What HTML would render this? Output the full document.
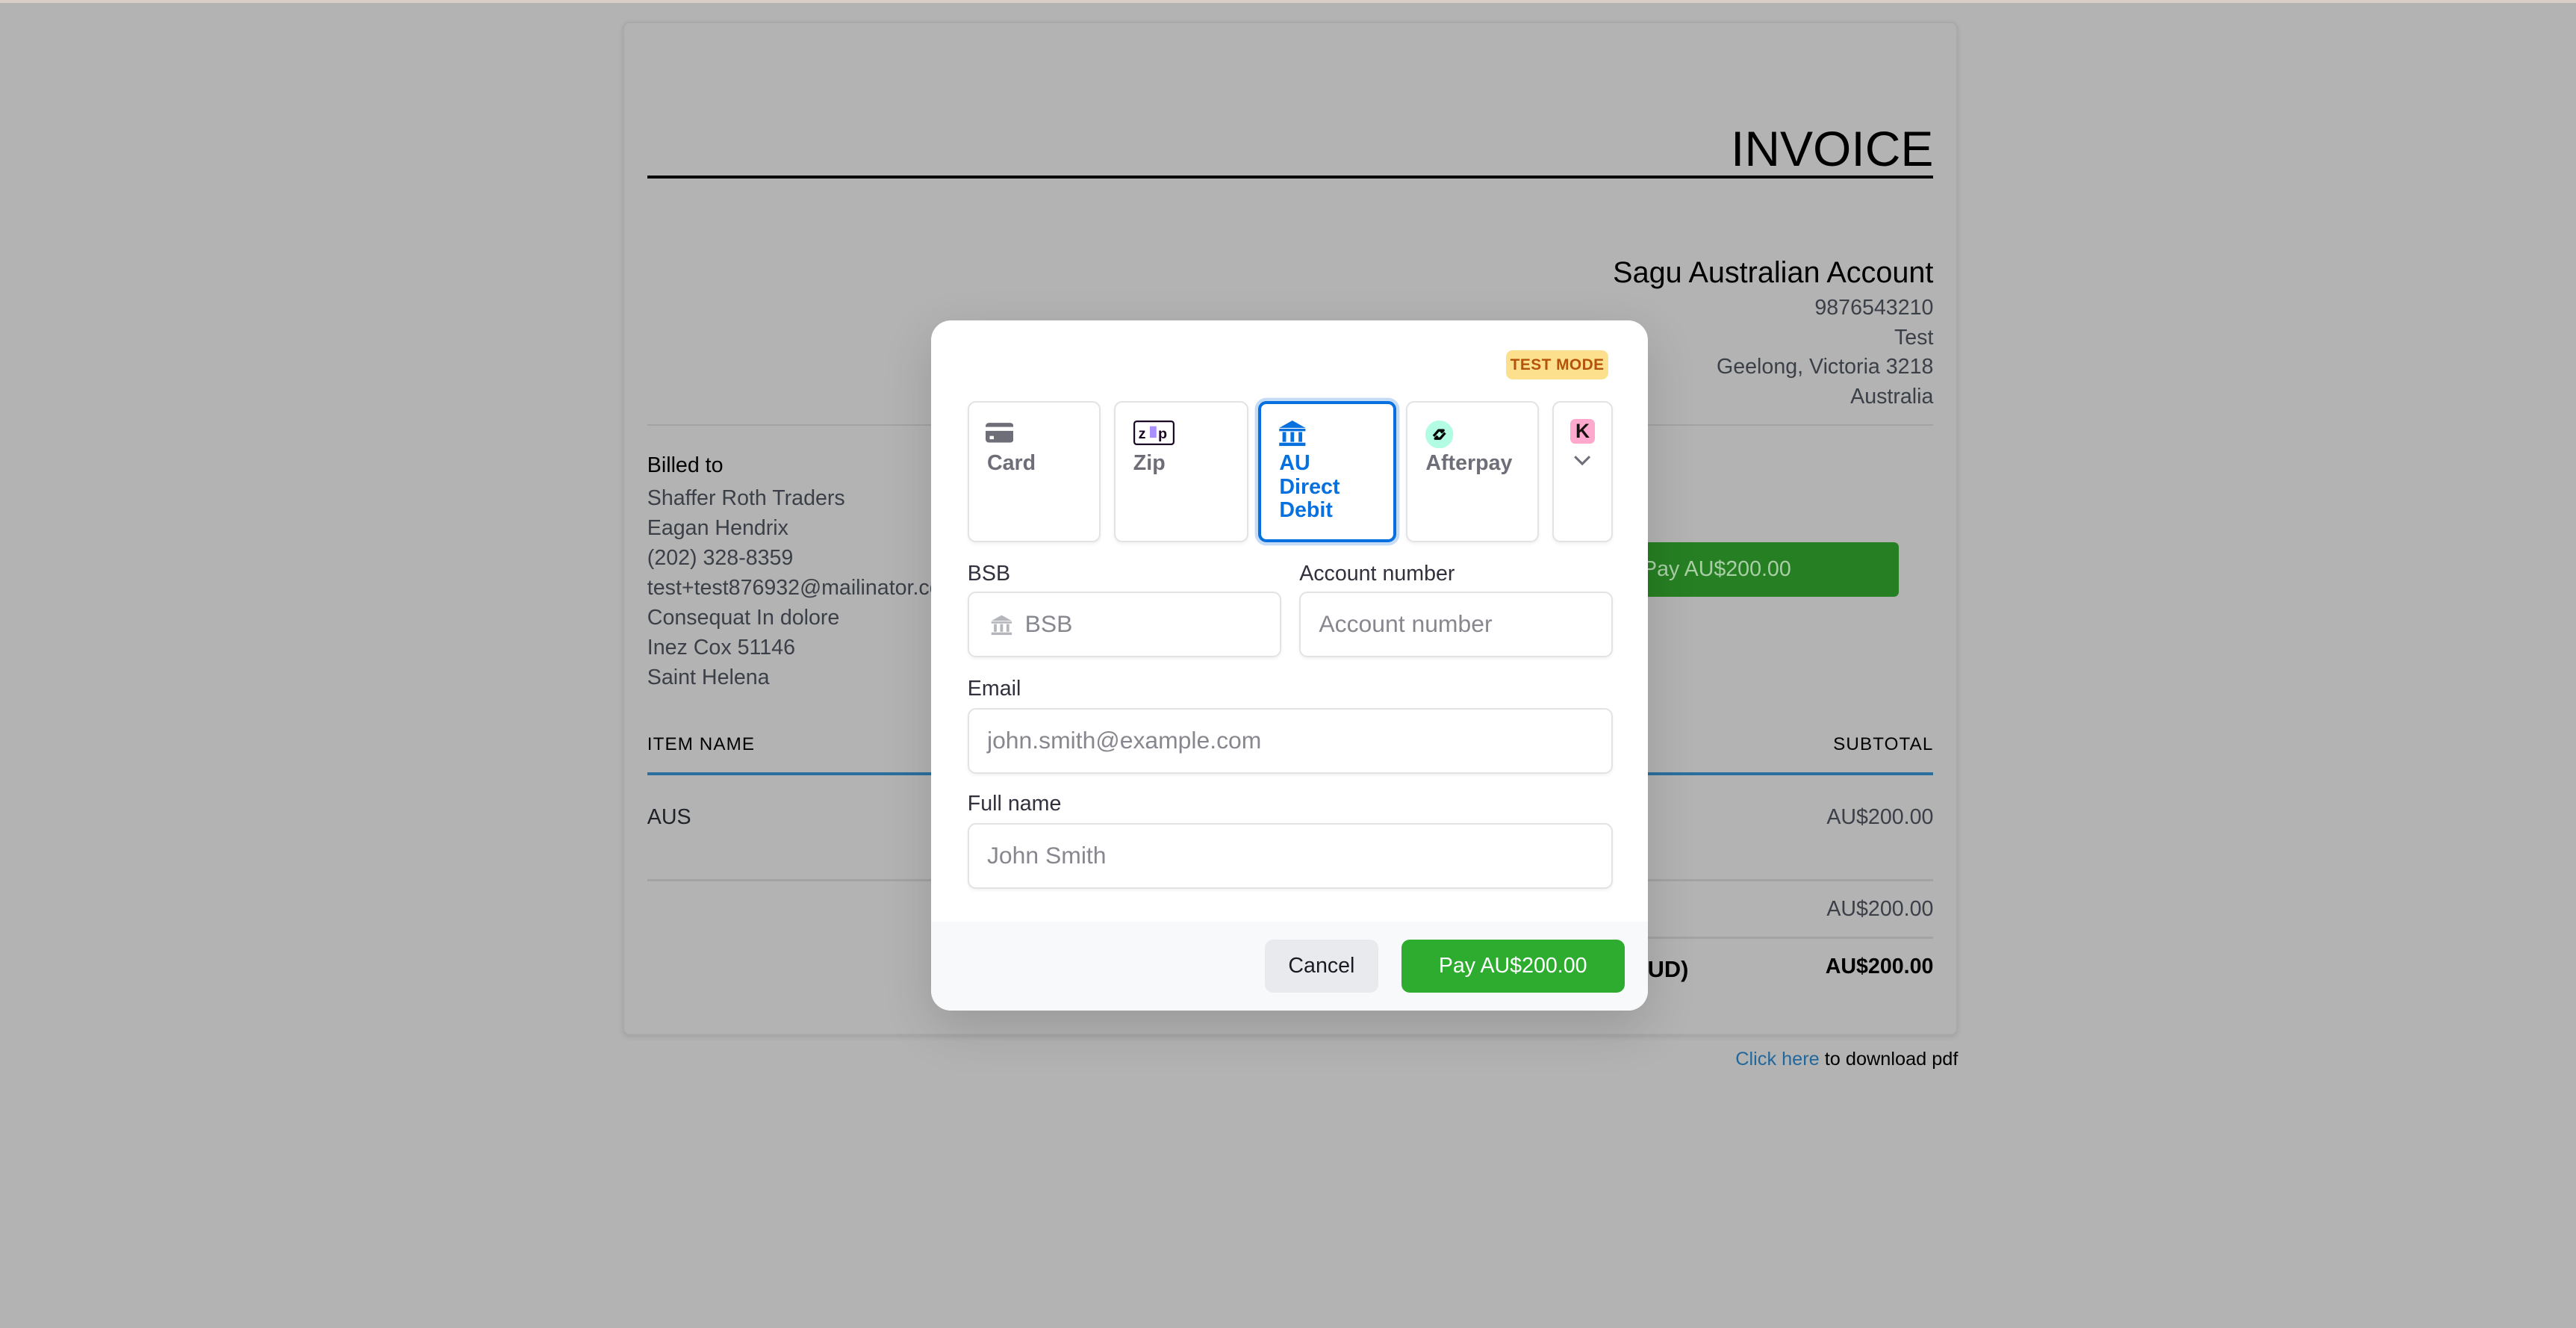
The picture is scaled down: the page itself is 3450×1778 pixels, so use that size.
<!DOCTYPE html>
<html><head><meta charset="utf-8">
<style>
*{box-sizing:border-box;margin:0;padding:0}
html,body{width:3450px;height:1778px;overflow:hidden;background:#b3b3b3}
#w{position:absolute;left:0;top:0;width:1568px;height:808px;zoom:2.2;font-family:"Liberation Sans",Helvetica,Arial,sans-serif;background:#b3b3b3}
.a{position:absolute;white-space:nowrap}
.r{text-align:right}
.g{color:#3b3f47;font-size:13px}
.tab{position:absolute;top:244px;height:86px;background:#fff;border:1px solid #e3e3e3;border-radius:5px;box-shadow:0 1px 2px rgba(0,0,0,.06)}
.tl{position:absolute;left:11px;top:30px;font-size:13px;font-weight:bold;color:#6d6e78;line-height:14.5px}
.lab{position:absolute;font-size:13px;color:#30313d}
.inp{position:absolute;height:40px;background:#fff;border:1px solid #e3e3e3;border-radius:5px;box-shadow:0 1px 2px rgba(0,0,0,.05);font-size:14.5px;color:#87888f;padding-left:11px;line-height:38px}
</style></head><body><div id="w">
<div class="a" style="left:0;top:0;width:1568px;height:2px;background:#d9cfc8"></div>
<div class="a" style="left:379px;top:13px;width:813px;height:617px;border:1px solid #a9a9a9;border-radius:4px;background:#b3b3b3;box-shadow:0 1px 3px rgba(0,0,0,.1)"></div>
<div class="a r" style="right:391px;top:73px;font-size:30px;color:#000">INVOICE</div>
<div class="a" style="left:394px;top:107px;width:783px;height:1.5px;background:#000"></div>
<div class="a r" style="right:391px;top:156px;font-size:18px;color:#000">Sagu Australian Account</div>
<div class="a r g" style="right:391px;top:180px">9876543210</div>
<div class="a r g" style="right:391px;top:198px">Test</div>
<div class="a r g" style="right:391px;top:216px">Geelong, Victoria 3218</div>
<div class="a r g" style="right:391px;top:234px">Australia</div>
<div class="a" style="left:394px;top:258px;width:783px;height:1px;background:#a3a3a3"></div>
<div class="a" style="left:394px;top:276px;font-size:13px;color:#000">Billed to</div>
<div class="a g" style="left:394px;top:294px;line-height:18.2px">Shaffer Roth Traders<br>Eagan Hendrix<br>(202) 328-8359<br>test+test876932@mailinator.com<br>Consequat In dolore<br>Inez Cox 51146<br>Saint Helena</div>
<div class="a" style="left:990px;top:330px;width:166px;height:33px;background:#267f22;border-radius:3px;color:#a9cfa7;font-size:13px;line-height:33px;padding-left:10px">Pay AU$200.00</div>
<div class="a" style="left:394px;top:447px;font-size:11px;letter-spacing:.5px;color:#000">ITEM NAME</div>
<div class="a r" style="right:391px;top:447px;font-size:11px;letter-spacing:.5px;color:#000">SUBTOTAL</div>
<div class="a" style="left:394px;top:470px;width:783px;height:2px;background:#2b6f9e"></div>
<div class="a" style="left:394px;top:490px;font-size:13px;color:#1f2329">AUS</div>
<div class="a r g" style="right:391px;top:490px">AU$200.00</div>
<div class="a" style="left:394px;top:535px;width:783px;height:1.5px;background:#a3a3a3"></div>
<div class="a r g" style="right:391px;top:546px">AU$200.00</div>
<div class="a" style="left:940px;top:570px;width:237px;height:1.5px;background:#a3a3a3"></div>
<div class="a" style="left:1003px;top:582px;font-size:14px;font-weight:bold;color:#000">UD)</div>
<div class="a r" style="right:391px;top:581px;font-size:13px;font-weight:bold;color:#000">AU$200.00</div>
<div class="a r" style="right:376px;top:638px;font-size:11.5px;color:#000"><span style="color:#22689c">Click here</span> to download pdf</div>

<div class="a" style="left:567px;top:195px;width:436px;height:420px;background:#fff;border-radius:12px;overflow:hidden;box-shadow:0 10px 30px rgba(0,0,0,.15)">
 <div class="a" style="left:0;top:366px;width:436px;height:54px;background:#f8f9fb"></div>
 <div class="a" style="left:350px;top:18px;width:62px;height:18px;background:#fde08d;border-radius:4px;font-size:9.5px;font-weight:bold;color:#b45309;line-height:18px;text-align:center;letter-spacing:.2px">TEST MODE</div>
</div>
<div class="tab" style="left:589px;width:81px">
 <svg class="a" style="left:10px;top:12px" width="17" height="13" viewBox="0 0 17 13"><rect x="0" y="0.5" width="17" height="12" rx="2" fill="#6d6e78"/><rect x="0" y="3" width="17" height="2.4" fill="#fff"/><rect x="2.5" y="8.5" width="2.5" height="2" fill="#fff"/></svg>
 <div class="tl">Card</div></div>
<div class="tab" style="left:678px;width:82px">
 <svg class="a" style="left:11px;top:11px" width="25" height="15" viewBox="0 0 25 15"><rect x=".5" y=".5" width="24" height="14" rx="1.5" fill="#fff" stroke="#1a0826"/><rect x="10" y="3.5" width="4" height="7" fill="#aa8fff"/><text x="3" y="11" font-size="9" font-weight="bold" fill="#1a0826" font-family="Liberation Sans">z</text><text x="15" y="11" font-size="9" font-weight="bold" fill="#1a0826" font-family="Liberation Sans">p</text></svg>
 <div class="tl">Zip</div></div>
<div class="tab" style="left:766px;width:84px;border:2px solid #0570de;box-shadow:0 0 0 2px #c6dbf6">
 <svg class="a" style="left:10px;top:10px" width="18" height="16" viewBox="0 0 18 16"><path d="M9 0L17 4.5H1Z" fill="#0570de"/><rect x="1" y="5" width="16" height="1.5" fill="#0570de"/><rect x="3" y="7" width="2.2" height="6" fill="#0570de"/><rect x="7.9" y="7" width="2.2" height="6" fill="#0570de"/><rect x="12.8" y="7" width="2.2" height="6" fill="#0570de"/><rect x="1" y="13.5" width="16" height="2" fill="#0570de"/></svg>
 <div class="tl" style="left:11px;top:29px;color:#0570de">AU<br>Direct<br>Debit</div></div>
<div class="tab" style="left:856px;width:81px">
 <svg class="a" style="left:11px;top:11px" width="17" height="17" viewBox="0 0 17 17"><circle cx="8.5" cy="8.5" r="8.5" fill="#b2fce4"/><path d="M5 9.5l3-3.5h3l-1.5 1.5M12 7.5l-3 3.5H6l1.5-1.5" stroke="#000" stroke-width="1.5" fill="none" stroke-linejoin="round"/></svg>
 <div class="tl">Afterpay</div></div>
<div class="tab" style="left:945px;width:37px">
 <div class="a" style="left:10px;top:10px;width:15px;height:15px;background:#ffa8cd;border-radius:3px;font-size:12px;font-weight:bold;color:#17120f;text-align:center;line-height:15px">K</div>
 <svg class="a" style="left:12px;top:32px" width="11" height="7" viewBox="0 0 11 7"><path d="M1 1l4.5 4.5L10 1" stroke="#6d6e78" stroke-width="1.4" fill="none"/></svg></div>

<div class="lab" style="left:589px;top:342px">BSB</div>
<div class="lab" style="left:791px;top:342px">Account number</div>
<div class="inp" style="left:589px;top:360px;width:191px;padding-left:34px">BSB
 <svg class="a" style="left:13px;top:13px" width="14" height="13" viewBox="0 0 18 16"><path d="M9 0L17 4.5H1Z" fill="#b5b6bb"/><rect x="1" y="5" width="16" height="1.5" fill="#b5b6bb"/><rect x="3" y="7" width="2.2" height="6" fill="#b5b6bb"/><rect x="7.9" y="7" width="2.2" height="6" fill="#b5b6bb"/><rect x="12.8" y="7" width="2.2" height="6" fill="#b5b6bb"/><rect x="1" y="13.5" width="16" height="2" fill="#b5b6bb"/></svg></div>
<div class="inp" style="left:791px;top:360px;width:191px">Account number</div>
<div class="lab" style="left:589px;top:412px">Email</div>
<div class="inp" style="left:589px;top:431px;width:393px">john.smith@example.com</div>
<div class="lab" style="left:589px;top:482px">Full name</div>
<div class="inp" style="left:589px;top:501px;width:393px">John Smith</div>
<div class="a" style="left:770px;top:572px;width:69px;height:32px;background:#e9eaed;border-radius:5px;font-size:13px;color:#1a1b25;text-align:center;line-height:32px">Cancel</div>
<div class="a" style="left:853px;top:572px;width:136px;height:32px;background:#2eac2f;border-radius:5px;font-size:13px;color:#fff;text-align:center;line-height:32px">Pay AU$200.00</div>
</div></body></html>
